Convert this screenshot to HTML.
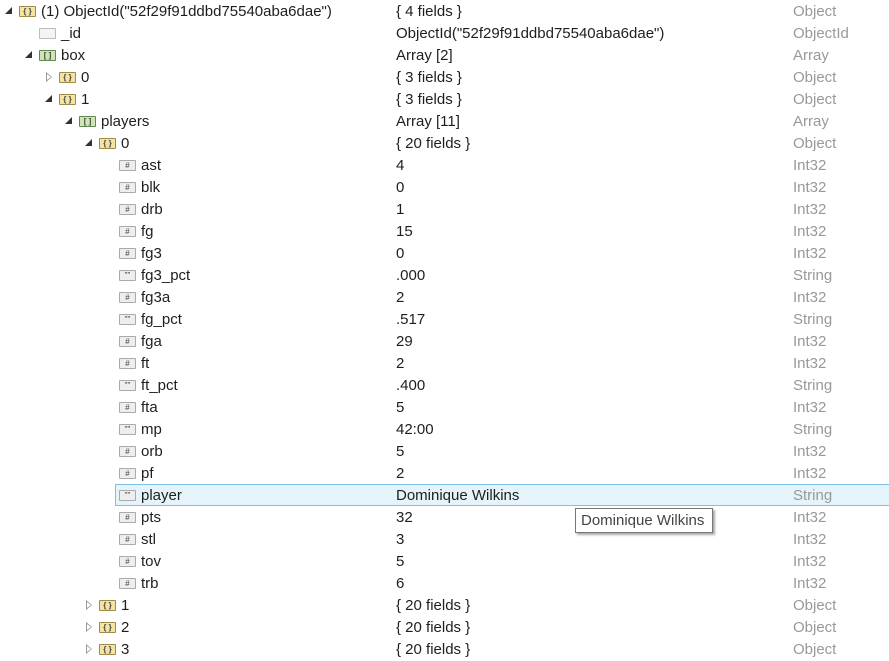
<!DOCTYPE html>
<html><head><meta charset="utf-8"><style>
body{margin:0;width:889px;height:658px;background:#fff;overflow:hidden;font-family:"Liberation Sans",sans-serif;font-size:15px;color:#1e1e1e;position:relative}
.r{position:absolute;left:0;width:889px;height:22px;line-height:22px}
.n,.v,.t{position:absolute;top:1px;white-space:nowrap}
.v{left:396px}.t{left:793px;color:#999}
.ic{position:absolute;top:6px;width:15px;height:9px;border:1px solid #a08a48;background:#f3e4a4;border-radius:1px;font-size:8px;line-height:9px;text-align:center;color:#444;font-weight:bold;font-style:normal}
.ar{border-color:#5e8a4a;background:#cde6b4}
.f{border-color:#aaa;background:#eee;font-weight:normal}
.b{border-color:#bbb;background:#f4f4f4}
.ex{position:absolute;top:7px;width:0;height:0;border-left:7px solid transparent;border-bottom:7px solid #333}
.co{position:absolute;top:6px;width:0;height:0;border-top:5px solid transparent;border-bottom:5px solid transparent;border-left:6px solid #999}
.co:after{content:"";position:absolute;left:-5px;top:-3px;border-top:3px solid transparent;border-bottom:3px solid transparent;border-left:4px solid #fff}
.hl{position:absolute;left:115px;top:484px;width:774px;height:20px;background:#e5f3fb;border:1px solid #7fc0e8}
.tip{position:absolute;left:575px;top:508px;width:138px;height:25px;border:1px solid #767676;background:#fff;box-shadow:2px 2px 2px #aaa;line-height:24px;font-size:15px;color:#444;padding-left:5px;box-sizing:border-box}
</style></head><body>
<div class="hl"></div>
<div class="r" style="top:0"><i class="ex" style="left:5px"></i><i class="ic" style="left:19px">{ }</i><span class="n" style="left:41px">(1) ObjectId("52f29f91ddbd75540aba6dae")</span><span class="v">{ 4 fields }</span><span class="t">Object</span></div>
<div class="r" style="top:22px"><i class="ic b" style="left:39px"></i><span class="n" style="left:61px">_id</span><span class="v">ObjectId("52f29f91ddbd75540aba6dae")</span><span class="t">ObjectId</span></div>
<div class="r" style="top:44px"><i class="ex" style="left:25px"></i><i class="ic ar" style="left:39px">[ ]</i><span class="n" style="left:61px">box</span><span class="v">Array [2]</span><span class="t">Array</span></div>
<div class="r" style="top:66px"><i class="co" style="left:46px"></i><i class="ic" style="left:59px">{ }</i><span class="n" style="left:81px">0</span><span class="v">{ 3 fields }</span><span class="t">Object</span></div>
<div class="r" style="top:88px"><i class="ex" style="left:45px"></i><i class="ic" style="left:59px">{ }</i><span class="n" style="left:81px">1</span><span class="v">{ 3 fields }</span><span class="t">Object</span></div>
<div class="r" style="top:110px"><i class="ex" style="left:65px"></i><i class="ic ar" style="left:79px">[ ]</i><span class="n" style="left:101px">players</span><span class="v">Array [11]</span><span class="t">Array</span></div>
<div class="r" style="top:132px"><i class="ex" style="left:85px"></i><i class="ic" style="left:99px">{ }</i><span class="n" style="left:121px">0</span><span class="v">{ 20 fields }</span><span class="t">Object</span></div>
<div class="r" style="top:154px"><i class="ic f" style="left:119px">#</i><span class="n" style="left:141px">ast</span><span class="v">4</span><span class="t">Int32</span></div>
<div class="r" style="top:176px"><i class="ic f" style="left:119px">#</i><span class="n" style="left:141px">blk</span><span class="v">0</span><span class="t">Int32</span></div>
<div class="r" style="top:198px"><i class="ic f" style="left:119px">#</i><span class="n" style="left:141px">drb</span><span class="v">1</span><span class="t">Int32</span></div>
<div class="r" style="top:220px"><i class="ic f" style="left:119px">#</i><span class="n" style="left:141px">fg</span><span class="v">15</span><span class="t">Int32</span></div>
<div class="r" style="top:242px"><i class="ic f" style="left:119px">#</i><span class="n" style="left:141px">fg3</span><span class="v">0</span><span class="t">Int32</span></div>
<div class="r" style="top:264px"><i class="ic f" style="left:119px">""</i><span class="n" style="left:141px">fg3_pct</span><span class="v">.000</span><span class="t">String</span></div>
<div class="r" style="top:286px"><i class="ic f" style="left:119px">#</i><span class="n" style="left:141px">fg3a</span><span class="v">2</span><span class="t">Int32</span></div>
<div class="r" style="top:308px"><i class="ic f" style="left:119px">""</i><span class="n" style="left:141px">fg_pct</span><span class="v">.517</span><span class="t">String</span></div>
<div class="r" style="top:330px"><i class="ic f" style="left:119px">#</i><span class="n" style="left:141px">fga</span><span class="v">29</span><span class="t">Int32</span></div>
<div class="r" style="top:352px"><i class="ic f" style="left:119px">#</i><span class="n" style="left:141px">ft</span><span class="v">2</span><span class="t">Int32</span></div>
<div class="r" style="top:374px"><i class="ic f" style="left:119px">""</i><span class="n" style="left:141px">ft_pct</span><span class="v">.400</span><span class="t">String</span></div>
<div class="r" style="top:396px"><i class="ic f" style="left:119px">#</i><span class="n" style="left:141px">fta</span><span class="v">5</span><span class="t">Int32</span></div>
<div class="r" style="top:418px"><i class="ic f" style="left:119px">""</i><span class="n" style="left:141px">mp</span><span class="v">42:00</span><span class="t">String</span></div>
<div class="r" style="top:440px"><i class="ic f" style="left:119px">#</i><span class="n" style="left:141px">orb</span><span class="v">5</span><span class="t">Int32</span></div>
<div class="r" style="top:462px"><i class="ic f" style="left:119px">#</i><span class="n" style="left:141px">pf</span><span class="v">2</span><span class="t">Int32</span></div>
<div class="r" style="top:484px"><i class="ic f" style="left:119px">""</i><span class="n" style="left:141px">player</span><span class="v">Dominique Wilkins</span><span class="t">String</span></div>
<div class="r" style="top:506px"><i class="ic f" style="left:119px">#</i><span class="n" style="left:141px">pts</span><span class="v">32</span><span class="t">Int32</span></div>
<div class="r" style="top:528px"><i class="ic f" style="left:119px">#</i><span class="n" style="left:141px">stl</span><span class="v">3</span><span class="t">Int32</span></div>
<div class="r" style="top:550px"><i class="ic f" style="left:119px">#</i><span class="n" style="left:141px">tov</span><span class="v">5</span><span class="t">Int32</span></div>
<div class="r" style="top:572px"><i class="ic f" style="left:119px">#</i><span class="n" style="left:141px">trb</span><span class="v">6</span><span class="t">Int32</span></div>
<div class="r" style="top:594px"><i class="co" style="left:86px"></i><i class="ic" style="left:99px">{ }</i><span class="n" style="left:121px">1</span><span class="v">{ 20 fields }</span><span class="t">Object</span></div>
<div class="r" style="top:616px"><i class="co" style="left:86px"></i><i class="ic" style="left:99px">{ }</i><span class="n" style="left:121px">2</span><span class="v">{ 20 fields }</span><span class="t">Object</span></div>
<div class="r" style="top:638px"><i class="co" style="left:86px"></i><i class="ic" style="left:99px">{ }</i><span class="n" style="left:121px">3</span><span class="v">{ 20 fields }</span><span class="t">Object</span></div>
<div class="tip">Dominique Wilkins</div>
</body></html>
